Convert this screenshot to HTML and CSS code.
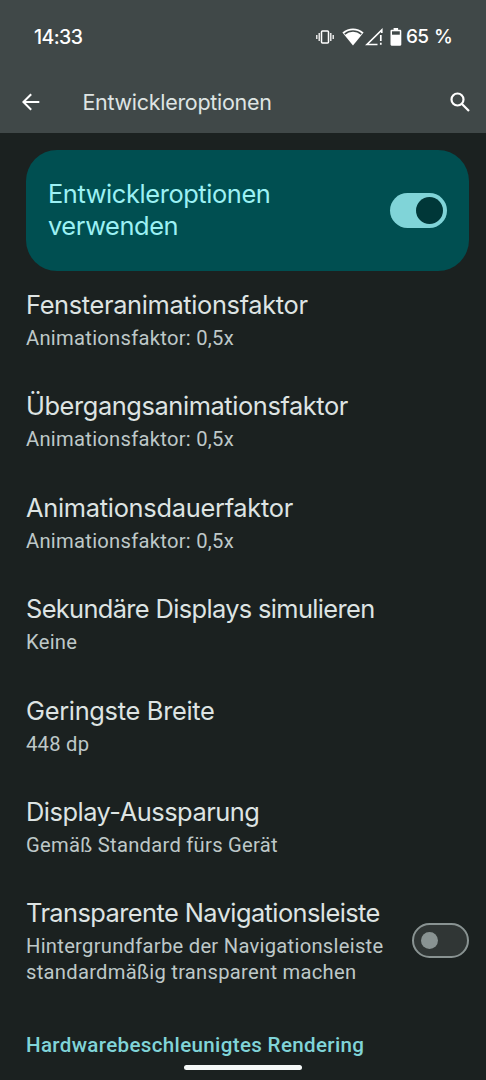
FILE: index.html
```html
<!DOCTYPE html>
<html lang="de">
<head>
<meta charset="utf-8">
<title>Entwickleroptionen</title>
<link rel="stylesheet" href="styles.css">
</head>
<body>
<div class="screen">
  <header class="top">
    <div class="status">
      <span class="clock">14:33</span>
      <div class="status-icons">
        <svg class="vibrate" width="18" height="14" viewBox="0 0 18 14" fill="none" stroke="currentColor" stroke-width="1.3"><rect x="5.5" y="1.1" width="7" height="11.8" rx="1" stroke-width="1.5"/><path d="M3.2 3v8M.8 5v4M14.8 3v8M17.2 5v4"/></svg>
        <svg class="wifi" width="22" height="18" viewBox="0 0 22 18"><path d="M.4 4.6C6.5-.8 15.5-.8 21.6 4.6L11 17.6Z" fill="currentColor"/><path d="M2.700 6.100C7.500 2 14.500 2 19.300 6.100" fill="none" stroke="#404848" stroke-width="1.400"/></svg>
        <svg class="signal" width="18" height="18" viewBox="0 0 18 18"><path d="M16.800 5V2L2 16.500H12.500" fill="none" stroke="currentColor" stroke-width="1.600"/><path d="M15.800 7v6M15.800 14.800v2" stroke="currentColor" stroke-width="1.700" fill="none"/></svg>
        <svg class="battery" width="12" height="18" viewBox="0 0 12 18"><path d="M3.600 0h4.500v1.800H10.200a1.100 1.100 0 0 1 1.100 1.100V16.600a1.100 1.100 0 0 1-1.100 1.100H1.600A1.100 1.100 0 0 1 .5 16.600V2.900a1.100 1.100 0 0 1 1.100-1.100h2Z" fill="currentColor"/><path d="M2 3.300h7.800v3.400H2Z" fill="#404848"/></svg>
        <span class="percent">65 %</span>
      </div>
    </div>
    <div class="appbar">
      <svg class="back" width="18" height="18" viewBox="0 0 18 18" fill="none" stroke="currentColor" stroke-width="2"><path d="M17.300 9H1.600M9.200 1.200 1.400 9l7.800 7.800"/></svg>
      <h1 class="page-title">Entwickleroptionen</h1>
      <svg class="search" width="20" height="20" viewBox="0 0 20 20" fill="none" stroke="currentColor" stroke-width="2.200"><circle cx="7.500" cy="7.500" r="6"/><path d="m12 12 7 7"/></svg>
    </div>
  </header>
  <main class="content">
    <section class="master">
      <div class="master-label">Entwickleroptionen<br>verwenden</div>
      <div class="switch switch-on"><span class="knob"></span></div>
    </section>
    <div class="list">
      <div class="row"><div class="title">Fensteranimationsfaktor</div><div class="sub">Animationsfaktor: 0,5x</div></div>
      <div class="row"><div class="title title-transition">Übergangsanimationsfaktor</div><div class="sub">Animationsfaktor: 0,5x</div></div>
      <div class="row"><div class="title title-duration">Animationsdauerfaktor</div><div class="sub">Animationsfaktor: 0,5x</div></div>
      <div class="row"><div class="title title-displays">Sekundäre Displays simulieren</div><div class="sub">Keine</div></div>
      <div class="row"><div class="title title-width">Geringste Breite</div><div class="sub">448 dp</div></div>
      <div class="row"><div class="title title-cutout">Display-Aussparung</div><div class="sub">Gemäß Standard fürs Gerät</div></div>
      <div class="row row-switch">
        <div class="row-text"><div class="title title-nav">Transparente Navigationsleiste</div><div class="sub">Hintergrundfarbe der Navigationsleiste<br>standardmäßig transparent machen</div></div>
        <div class="switch switch-off"><span class="knob"></span></div>
      </div>
    </div>
    <h2 class="category">Hardwarebeschleunigtes Rendering</h2>
  </main>
  <div class="nav-handle"></div>
</div>
</body>
</html>
```
FILE: styles.css
```css
* { box-sizing: border-box; }
body { margin: 0; background: #1b2120; font-family: Inter, "Noto Sans", sans-serif; }
.screen { position: relative; width: 486px; height: 1080px; overflow: hidden; background: #1b2120; color: #dee4e3; }
svg { display: block; flex: none; }

.top { height: 132.5px; background: #404848; color: #fff; }
.status { height: 72px; padding: 1px 34px 0; display: flex; align-items: center; justify-content: space-between; }
.clock { font-size: 19.5px; font-weight: 500; letter-spacing: -.6px; }
.status-icons { display: flex; align-items: center; }
.wifi { margin-left: 8.500px; }
.signal { margin-left: 1px; }
.battery { margin-left: 7px; }
.percent { margin-left: 4px; font-size: 19px; font-weight: 500; letter-spacing: -.8px; word-spacing: 1.500px; }
.appbar { height: 60px; padding: 0 16px 0 22px; display: flex; align-items: center; }
.page-title { margin: 0 auto 0 42.500px; font-size: 21.500px; font-weight: 400; letter-spacing: -.3px; color: #dee4e3; }

.content { padding: 17.500px 17px 0 26px; }
.master { height: 121px; padding: 0 22px; border-radius: 31px; display: flex; align-items: center; justify-content: space-between; background: #004f51; }
.master-label { padding-bottom: 2px; font-size: 25.400px; line-height: 32px; letter-spacing: -.4px; color: #9cf1f4; }

.switch { width: 57px; height: 35px; border-radius: 18px; display: flex; align-items: center; flex: none; }
.switch-on { padding-right: 4px; justify-content: flex-end; background: #80d4d8; }
.switch-on .knob { width: 27px; height: 27px; border-radius: 50%; background: #003738; }
.switch-off { padding-left: 6.500px; border: 2px solid #899392; background: #303635; }
.switch-off .knob { width: 17.500px; height: 17.500px; border-radius: 50%; background: #899392; }

.list { padding-top: 17.900px; display: grid; gap: 39px; }
.row-switch { display: flex; align-items: center; justify-content: space-between; }
.title { margin-bottom: 5px; font-size: 25.400px; line-height: 32px; letter-spacing: -.35px; white-space: nowrap; }
.title-transition { letter-spacing: -.41px; }
.title-duration { letter-spacing: -.28px; }
.title-displays { letter-spacing: -.64px; }
.title-width { letter-spacing: -.3px; }
.title-cutout { letter-spacing: -.48px; }
.title-nav { letter-spacing: -.57px; }
.sub { font-family: Roboto, "Noto Sans", sans-serif; font-size: 20.200px; line-height: 25.400px; letter-spacing: .27px; white-space: nowrap; color: #bec8c8; }
.row-switch .switch { margin-top: -1px; }
.row-text { width: 360px; }
.category { margin: 48px 0 0; font-family: Roboto, "Noto Sans", sans-serif; font-size: 20.600px; font-weight: 500; line-height: 25.400px; letter-spacing: .33px; white-space: nowrap; color: #80d4d8; }

.nav-handle { position: absolute; left: 184px; top: 1064.500px; width: 118px; height: 5px; border-radius: 3px; background: #f5f8f7; }
```
